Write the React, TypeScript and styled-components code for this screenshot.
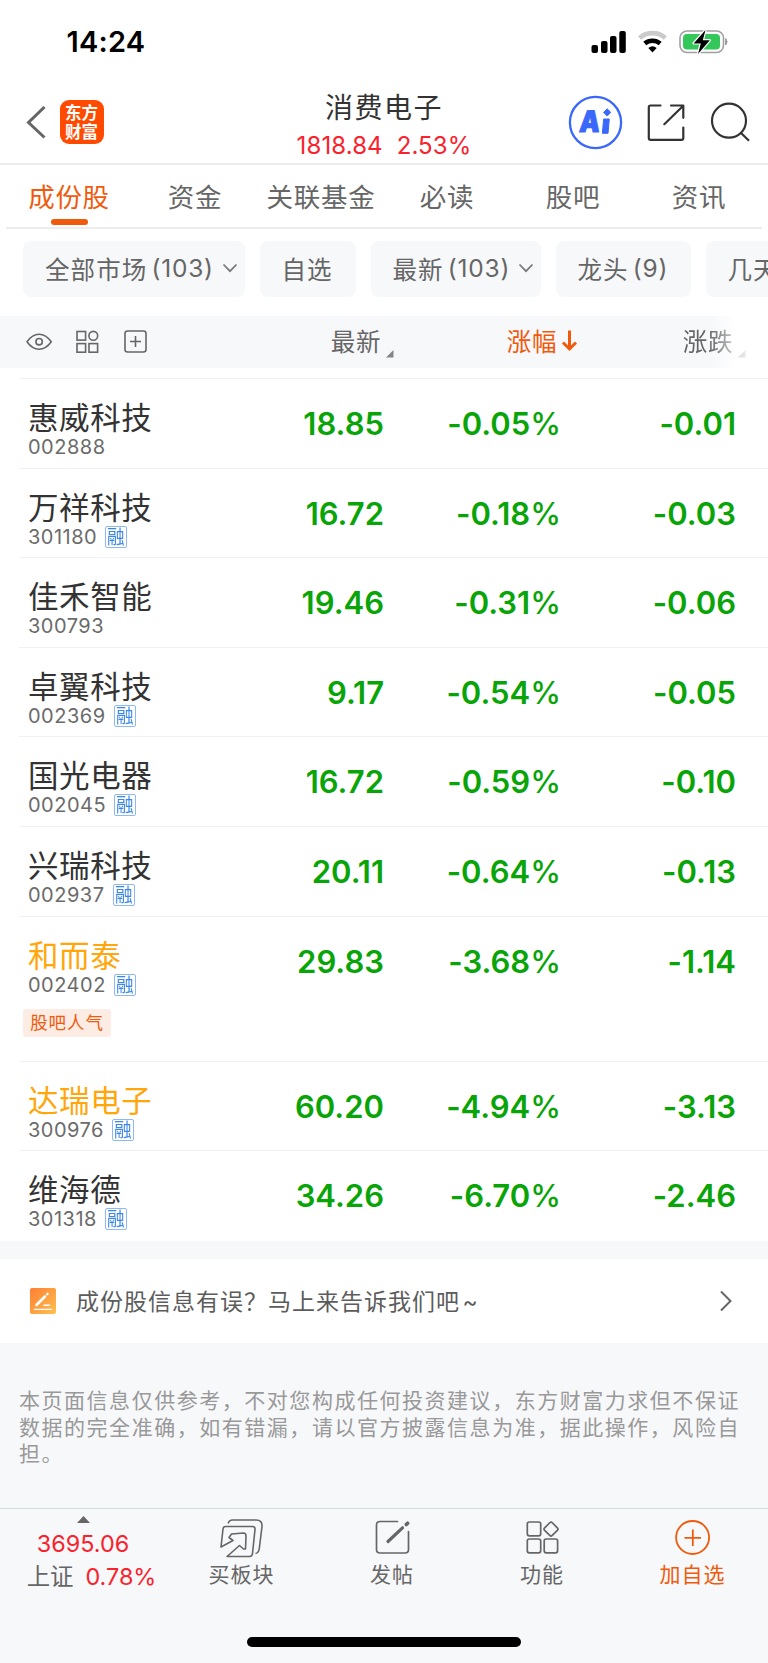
import React from 'react';
import styled, { createGlobalStyle } from 'styled-components';

const Global = createGlobalStyle`
  * { box-sizing: border-box; }
  body {
    margin: 0;
    background: #f7f8fa;
    font-family: Inter, "Noto Sans CJK SC", sans-serif;
    color: #333;
    overflow: hidden;
  }
`;

const orange = '#f05a0c';
const grey = '#666';
const panel = '#f7f8fa';

const Page = styled.div`
  width: 768px;
  height: 1663px;
  display: flex;
  flex-direction: column;
  overflow: hidden;
  background: ${panel};
  white-space: nowrap;
`;

const StatusBar = styled.div`
  height: 82px;
  flex: none;
  background: #fff;
  display: flex;
  justify-content: space-between;
  padding: 24px 39px 0 66.5px;
`;
const Clock = styled.div`
  font-size: 29px;
  line-height: 36px;
  font-weight: 600;
  color: #000;
  letter-spacing: 0.2px;
`;
const StatusIcons = styled.svg`
  display: block;
  margin-top: 4px;
`;

const Header = styled.header`
  height: 83px;
  flex: none;
  background: #fff;
  border-bottom: 2px solid #ededed;
  display: grid;
  grid-template-columns: 250px 1fr 250px;
`;
const HeaderLeft = styled.div`
  display: flex;
  align-items: flex-start;
  padding: 18px 0 0 26px;
  gap: 13.5px;
`;
const BackIcon = styled.svg`
  display: block;
  margin-top: 6px;
`;
const Logo = styled.div`
  width: 44px;
  height: 44px;
  border-radius: 9px;
  background: #ff4a00;
  color: #fff;
  font-size: 16.5px;
  line-height: 18.5px;
  font-weight: 700;
  text-align: center;
  padding-top: 4px;
`;
const HeaderMid = styled.div`
  text-align: center;
  padding-top: 6px;
`;
const Title = styled.div`
  font-size: 28px;
  line-height: 40px;
  letter-spacing: 1.5px;
`;
const Quote = styled.div`
  display: flex;
  justify-content: center;
  gap: 14px;
  margin-top: 4px;
  font-size: 24px;
  line-height: 28px;
  letter-spacing: 0.1px;
  color: #f8232c;
`;
const HeaderRight = styled.div`
  padding: 13px 16px 0 0;
  display: flex;
  justify-content: flex-end;
`;

const TabBar = styled.nav`
  height: 64px;
  flex: none;
  background: #fff;
  padding: 0 6px;
`;
const TabList = styled.div`
  display: grid;
  grid-template-columns: repeat(6, 1fr);
  height: 64px;
  border-bottom: 2px solid #ededed;
`;
const Tab = styled.div<{ $active?: boolean }>`
  display: flex;
  flex-direction: column;
  align-items: center;
  padding-top: 13px;
  font-size: 26.5px;
  line-height: 38px;
  letter-spacing: 0.7px;
  color: ${p => (p.$active ? orange : grey)};
  &::after {
    content: '';
    width: 37px;
    height: 6px;
    margin-top: 3px;
    border-radius: 3px;
    background: ${p => (p.$active ? orange : 'transparent')};
  }
`;

const ChipRow = styled.div`
  flex: none;
  height: 87px;
  background: #fff;
  padding: 12px 0 0 23px;
  display: flex;
  gap: 15px;
  overflow: hidden;
`;
const Chip = styled.div<{ $w: number }>`
  flex: none;
  width: ${p => p.$w}px;
  height: 56px;
  border-radius: 8px;
  background: ${panel};
  padding: 0 0 2px 22px;
  display: flex;
  align-items: center;
  font-size: 24.5px;
  letter-spacing: 1.1px;
  color: ${grey};
`;
const Count = styled.span`
  margin-left: 4px;
  font-size: 24.5px;
  letter-spacing: 0.8px;
`;
const Caret = styled.svg`
  margin: 0 0 0 8px;
`;

const TableHead = styled.div`
  flex: none;
  height: 51.5px;
  background: linear-gradient(to right, ${panel} 712px, #fff 736px);
  display: grid;
  grid-template-columns: 305px 89px 183px 191px;
  align-items: center;
`;
const Tools = styled.div`
  display: flex;
  align-items: center;
  padding-left: 26px;
`;
const HeadCell = styled.div<{ $active?: boolean; $faded?: boolean }>`
  display: flex;
  justify-content: flex-end;
  align-items: center;
  height: 52px;
  padding-bottom: 3px;
  font-size: 24.5px;
  letter-spacing: 0.6px;
  color: ${p => (p.$active ? orange : grey)};
  padding-right: ${p => (p.$faded ? 22 : 0)}px;
  ${p => p.$faded && '-webkit-mask-image: linear-gradient(to right, #000 132px, rgba(0,0,0,.35) 157px, rgba(0,0,0,.2) 168px);'}
`;
const Corner = styled.svg`
  margin: 26px 0 0 5px;
`;

const Table = styled.div`
  flex: none;
  background: #fff;
  padding: 10.5px 0 0 19px;
  height: 873.5px;
`;
const Row = styled.div<{ $tall?: boolean }>`
  height: ${p => (p.$tall ? 145 : 89.6)}px;
  border-top: 1px solid #f1f1f3;
  display: grid;
  grid-template-columns: 190px 175px 177px 175px;
  padding-left: 9px;
`;
const NameCell = styled.div`
  padding-top: 18px;
`;
const Name = styled.div<{ $hot?: boolean }>`
  font-size: 30.5px;
  line-height: 42px;
  letter-spacing: 0.6px;
  color: ${p => (p.$hot ? '#ffa60a' : '#333')};
`;
const CodeLine = styled.div`
  display: flex;
  align-items: center;
  gap: 8px;
  height: 24px;
  margin-top: -4px;
  font-size: 20px;
  letter-spacing: 0.5px;
  color: #6b6b6b;
`;
const Margin = styled.span`
  width: 22px;
  height: 22px;
  border: 1.5px solid #8db8f2;
  border-radius: 2px;
  display: flex;
  justify-content: center;
  align-items: center;
  font-size: 19.5px;
  line-height: 20px;
  letter-spacing: 0;
  color: #3d87e6;
  overflow: hidden;
  & > span { transform: scaleX(0.9); margin: 0 -2px; }
`;
const Tag = styled.div`
  width: 88px;
  height: 28px;
  margin: 12px 0 0 -5px;
  border-radius: 3px;
  background: #fdece3;
  color: ${orange};
  font-size: 17.5px;
  line-height: 27px;
  letter-spacing: 0.9px;
  text-align: center;
`;
const Num = styled.div`
  text-align: right;
  padding-top: 26px;
  padding-right: 9px;
  font-size: 31px;
  line-height: 38px;
  font-weight: 600;
  font-feature-settings: "calt" 0;
  color: #08a408;
`;
const Percent = styled.span`
  font-weight: 500;
`;

const Feedback = styled.div`
  flex: none;
  margin-top: 18px;
  height: 84px;
  background: #fff;
  display: flex;
  align-items: center;
  padding: 0 35px 0 30px;
  font-size: 23px;
  letter-spacing: 1px;
  color: #5c5c5c;
`;
const FeedbackText = styled.span`
  flex: 1;
  margin: -2px 0 0 20px;
  word-spacing: -5px;
`;
const Disclaimer = styled.p`
  flex: 1;
  margin: 0;
  padding: 45px 0 0 19px;
  font-size: 21px;
  line-height: 26.6px;
  letter-spacing: 1.53px;
  color: #999;
`;

const BottomBar = styled.footer`
  flex: none;
  height: 155px;
  border-top: 1px solid #d3dcdc;
  display: flex;
  flex-direction: column;
`;
const Actions = styled.div`
  display: grid;
  grid-template-columns: 166px 151px 150px 150px 151px;
  height: 128px;
`;
const Index = styled.div`
  display: flex;
  flex-direction: column;
  align-items: center;
  padding-top: 7px;
  font-size: 23.4px;
  line-height: 32px;
  color: #f8232c;
`;
const IndexValue = styled.div`
  margin-top: 5px;
`;
const IndexChange = styled.div`
  display: flex;
  gap: 12px;
  padding-left: 17px;
  margin-top: 1px;
`;
const IndexName = styled.span`
  color: ${grey};
`;
const Action = styled.div<{ $accent?: boolean }>`
  display: flex;
  flex-direction: column;
  align-items: center;
  padding-top: 7px;
  font-size: 21px;
  line-height: 32px;
  letter-spacing: 1px;
  color: ${p => (p.$accent ? orange : grey)};
  & > svg { display: block; margin-bottom: 1px; }
`;
const HomeIndicator = styled.div`
  width: 274px;
  height: 10px;
  border-radius: 5px;
  background: #000;
  align-self: center;
`;

const tabs = ['成份股', '资金', '关联基金', '必读', '股吧', '资讯'];
const chips: { label: string; count?: string; caret?: boolean; w: number }[] = [
  { label: '全部市场', count: '(103)', caret: true, w: 221.5 },
  { label: '自选', w: 96 },
  { label: '最新', count: '(103)', caret: true, w: 170 },
  { label: '龙头', count: '(9)', w: 135 },
  { label: '几天', w: 150 },
];
const stocks: { name: string; code: string; rong?: boolean; hot?: boolean; tag?: string; v: string[] }[] = [
  { name: '惠威科技', code: '002888', v: ['18.85', '-0.05%', '-0.01'] },
  { name: '万祥科技', code: '301180', rong: true, v: ['16.72', '-0.18%', '-0.03'] },
  { name: '佳禾智能', code: '300793', v: ['19.46', '-0.31%', '-0.06'] },
  { name: '卓翼科技', code: '002369', rong: true, v: ['9.17', '-0.54%', '-0.05'] },
  { name: '国光电器', code: '002045', rong: true, v: ['16.72', '-0.59%', '-0.10'] },
  { name: '兴瑞科技', code: '002937', rong: true, v: ['20.11', '-0.64%', '-0.13'] },
  { name: '和而泰', code: '002402', rong: true, hot: true, tag: '股吧人气', v: ['29.83', '-3.68%', '-1.14'] },
  { name: '达瑞电子', code: '300976', rong: true, hot: true, v: ['60.20', '-4.94%', '-3.13'] },
  { name: '维海德', code: '301318', rong: true, v: ['34.26', '-6.70%', '-2.46'] },
];

const StatusGlyphs = () => (
  <StatusIcons width="138" height="28" viewBox="591 28 138 28">
    <rect x="591.5" y="45" width="6.5" height="8" rx="2" />
    <rect x="601" y="41" width="6.5" height="12" rx="2" />
    <rect x="610" y="36" width="6.5" height="17" rx="2" />
    <rect x="619.3" y="31" width="6.5" height="22" rx="2" />
    <path d="M639.6 38 A19.5 19.5 0 0 1 665.4 38" fill="none" stroke="#cbcbcb" strokeWidth="4.6" />
    <path d="M644.8 43.6 A12 12 0 0 1 660.2 43.6" fill="none" stroke="#000" strokeWidth="4.6" />
    <path d="M648.3 48 Q652.5 44.4 656.7 48 L652.5 52.6 Z" />
    <rect x="680" y="31" width="43.5" height="21.5" rx="7" fill="none" stroke="#a0a0a0" strokeWidth="1.6" />
    <path d="M725.7 38.5 Q728.5 41.8 725.7 45 Z" fill="#999" stroke="#999" />
    <rect x="683" y="34" width="37" height="15.6" rx="4" fill="#34c759" />
    <path d="M705.5 30 L693.6 43.4 H700.8 L698 54 L709.8 40.3 H702.8 Z" fill="#000" stroke="#fff" strokeWidth="2.4" paintOrder="stroke" strokeLinejoin="round" />
  </StatusIcons>
);

const HeaderGlyphs = () => (
  <svg width="184" height="56" viewBox="568 95 184 56" fill="none" stroke="#333" strokeWidth="2.2">
    <circle cx="595.5" cy="122.5" r="25.6" stroke="#3a68fb" strokeWidth="2.3" />
    <g fill="#3a68fb" stroke="#3a68fb" strokeWidth="1" strokeLinejoin="round" fontFamily="Inter" fontWeight="900">
      <text transform="translate(578.8 131.8) skewX(-5)" fontSize="29.5" textLength="20.5" lengthAdjust="spacingAndGlyphs">A</text>
      <path d="M603.6 119 H609.3 L608 133.3 H602.4 Z M607.2 108.8 L610.8 112.4 L607.2 116 L603.6 112.4 Z" />
    </g>
    <g strokeLinecap="round" strokeLinejoin="round">
      <path d="M660.5 105.5 H650.5 Q648.8 105.5 648.8 107.2 V138 Q648.8 139.8 650.5 139.8 H681.5 Q683.3 139.8 683.3 138 V127.6" />
      <path d="M671 105.5 H683.3 V117.8 M683 106 L664.3 124.2" />
    </g>
    <circle cx="729" cy="120.7" r="17" />
    <path d="M741 133 L749 140.8" />
  </svg>
);

const ToolGlyphs = () => (
  <svg width="124" height="26" viewBox="26 329 124 26" fill="none" stroke="#666" strokeWidth="1.6">
    <path d="M27 341.7 C34 331.7 44 331.7 51.3 341.7 C44 351.7 34 351.7 27 341.7 Z" strokeLinejoin="round" />
    <circle cx="39.1" cy="341.7" r="3.2" />
    <rect x="77" y="331.5" width="8.6" height="8.6" />
    <circle cx="93.3" cy="335.8" r="4.4" />
    <rect x="77" y="343.6" width="8.6" height="8.6" />
    <rect x="89" y="343.6" width="8.6" height="8.6" />
    <rect x="125" y="331" width="21" height="21" rx="2.5" />
    <path d="M130 341.5 H141 M135.5 336 V347" />
  </svg>
);

const CaretIcon = () => (
  <Caret width="16" height="10" viewBox="0 0 16 10" fill="none" stroke="#777" strokeWidth="1.7">
    <path d="M1.5 1.5 L8 8.2 L14.5 1.5" />
  </Caret>
);
const CornerIcon = () => (
  <Corner width="8" height="8" viewBox="0 0 8 8"><path d="M7.5 0 V7.5 H0 Z" fill="#858585" /></Corner>
);

const App = () => (
  <Page>
    <Global />
    <StatusBar>
      <Clock>14:24</Clock>
      <StatusGlyphs />
    </StatusBar>
    <Header>
      <HeaderLeft>
        <BackIcon width="20" height="34" viewBox="0 0 20 34" fill="none" stroke="#666" strokeWidth="3">
          <path d="M18.5 1 L2.5 16.5 L18.5 31.5" />
        </BackIcon>
        <Logo>东方<br />财富</Logo>
      </HeaderLeft>
      <HeaderMid>
        <Title>消费电子</Title>
        <Quote><span>1818.84</span><span>2.53%</span></Quote>
      </HeaderMid>
      <HeaderRight><HeaderGlyphs /></HeaderRight>
    </Header>
    <TabBar>
      <TabList>
        {tabs.map((t, i) => <Tab key={t} $active={i === 0}>{t}</Tab>)}
      </TabList>
    </TabBar>
    <ChipRow>
      {chips.map(c => (
        <Chip key={c.label} $w={c.w}>
          {c.label}
          {c.count && <Count>{c.count}</Count>}
          {c.caret && <CaretIcon />}
        </Chip>
      ))}
    </ChipRow>
    <TableHead>
      <Tools><ToolGlyphs /></Tools>
      <HeadCell>最新<CornerIcon /></HeadCell>
      <HeadCell $active>
        涨幅
        <svg width="20" height="24" viewBox="0 0 20 24" fill="none" stroke={orange} strokeWidth="3">
          <path d="M12.5 1.5 V19.500 M6 13.500 L12.500 20 L19 13.500" />
        </svg>
      </HeadCell>
      <HeadCell $faded>涨跌<CornerIcon /></HeadCell>
    </TableHead>
    <Table>
      {stocks.map(s => (
        <Row key={s.code} $tall={!!s.tag}>
          <NameCell>
            <Name $hot={s.hot}>{s.name}</Name>
            <CodeLine>{s.code}{s.rong && <Margin><span>融</span></Margin>}</CodeLine>
            {s.tag && <Tag>{s.tag}</Tag>}
          </NameCell>
          {s.v.map(v => (
            <Num key={v}>{v.replace('%', '')}{v.endsWith('%') && <Percent>%</Percent>}</Num>
          ))}
        </Row>
      ))}
    </Table>
    <Feedback>
      <svg width="26" height="26" viewBox="0 0 26 26" fill="none" stroke="#fff" strokeLinecap="round">
        <defs>
          <linearGradient id="note" x1="0" y1="0" x2="1" y2="1">
            <stop offset="0" stopColor="#ff7e35" />
            <stop offset="1" stopColor="#ffc04f" />
          </linearGradient>
        </defs>
        <rect width="26" height="26" rx="2" fill="url(#note)" stroke="none" />
        <path d="M6.5 17 L15 8.5 M17.3 6.2 L17.6 5.9" strokeWidth="2.6" />
        <path d="M14 17.3 H19.5 M4.5 21.4 H21.5" strokeWidth="1.4" />
      </svg>
      <FeedbackText>成份股信息有误？马上来告诉我们吧 ~</FeedbackText>
      <svg width="13" height="22" viewBox="0 0 13 22" fill="none" stroke="#666" strokeWidth="2">
        <path d="M1 1.5 L10.5 11 L1 20.5" />
      </svg>
    </Feedback>
    <Disclaimer>
      本页面信息仅供参考，不对您构成任何投资建议，东方财富力求但不保证<br />
      数据的完全准确，如有错漏，请以官方披露信息为准，据此操作，风险自<br />
      担。
    </Disclaimer>
    <BottomBar>
      <Actions>
        <Index>
          <svg width="13" height="7" viewBox="0 0 13 7"><path d="M6.5 0 L13 7 H0 Z" fill="#666" /></svg>
          <IndexValue>3695.06</IndexValue>
          <IndexChange><IndexName>上证</IndexName>0.78%</IndexChange>
        </Index>
        <Action>
          <svg width="46" height="42" viewBox="219 1516 46 42" fill="none" stroke="#666" strokeWidth="1.6" strokeLinejoin="round">
            <path d="M228.2 1523.5 Q229 1520 232.5 1520 H256 Q262.5 1520 262 1526.5 L259.3 1548.5 Q258.7 1553 255.5 1553.5" />
            <path d="M225.5 1526.5 H252.5 Q255.3 1526.5 255 1529.5 L252.5 1553.5 Q252.2 1556.5 249.5 1556.5 H227 L239.5 1545.5 L243.5 1549 H245.5 L246 1536 Q246 1533 243.5 1533 L231.5 1534 L229 1537.5 L233 1540.5 L221 1547 L223 1529 Q223.3 1526.5 225.5 1526.5 Z" />
          </svg>
          买板块
        </Action>
        <Action>
          <svg width="38" height="42" viewBox="373 1516 38 42" fill="none" stroke="#666" strokeWidth="1.7" strokeLinecap="round">
            <path d="M397.5 1521.5 H380 Q376.5 1521.5 376.5 1525 V1549.5 Q376.5 1553 380 1553 H405 Q408.5 1553 408.5 1549.5 V1531.5" />
            <path d="M388 1541.5 L402.5 1527.8" strokeWidth="3.2" />
            <path d="M406.3 1524.5 L407.6 1523.2" strokeWidth="3.6" />
          </svg>
          发帖
        </Action>
        <Action>
          <svg width="38" height="42" viewBox="523 1516 38 42" fill="none" stroke="#666" strokeWidth="1.7">
            <rect x="527.3" y="1522" width="13.4" height="13.8" rx="2" />
            <rect x="527.3" y="1539" width="13.4" height="13.8" rx="2" />
            <rect x="544.2" y="1539" width="13.4" height="13.8" rx="2" />
            <rect x="545.6" y="1523.7" width="10.8" height="10.8" rx="1.8" transform="rotate(45 551 1529.1)" />
          </svg>
          功能
        </Action>
        <Action $accent>
          <svg width="38" height="42" viewBox="674 1516 38 42" fill="none" stroke={orange} strokeWidth="1.8">
            <circle cx="692.6" cy="1537.5" r="16.5" />
            <path d="M684.5 1537.8 H701 M692.8 1529.5 V1546" />
          </svg>
          加自选
        </Action>
      </Actions>
      <HomeIndicator />
    </BottomBar>
  </Page>
);

export default App;
